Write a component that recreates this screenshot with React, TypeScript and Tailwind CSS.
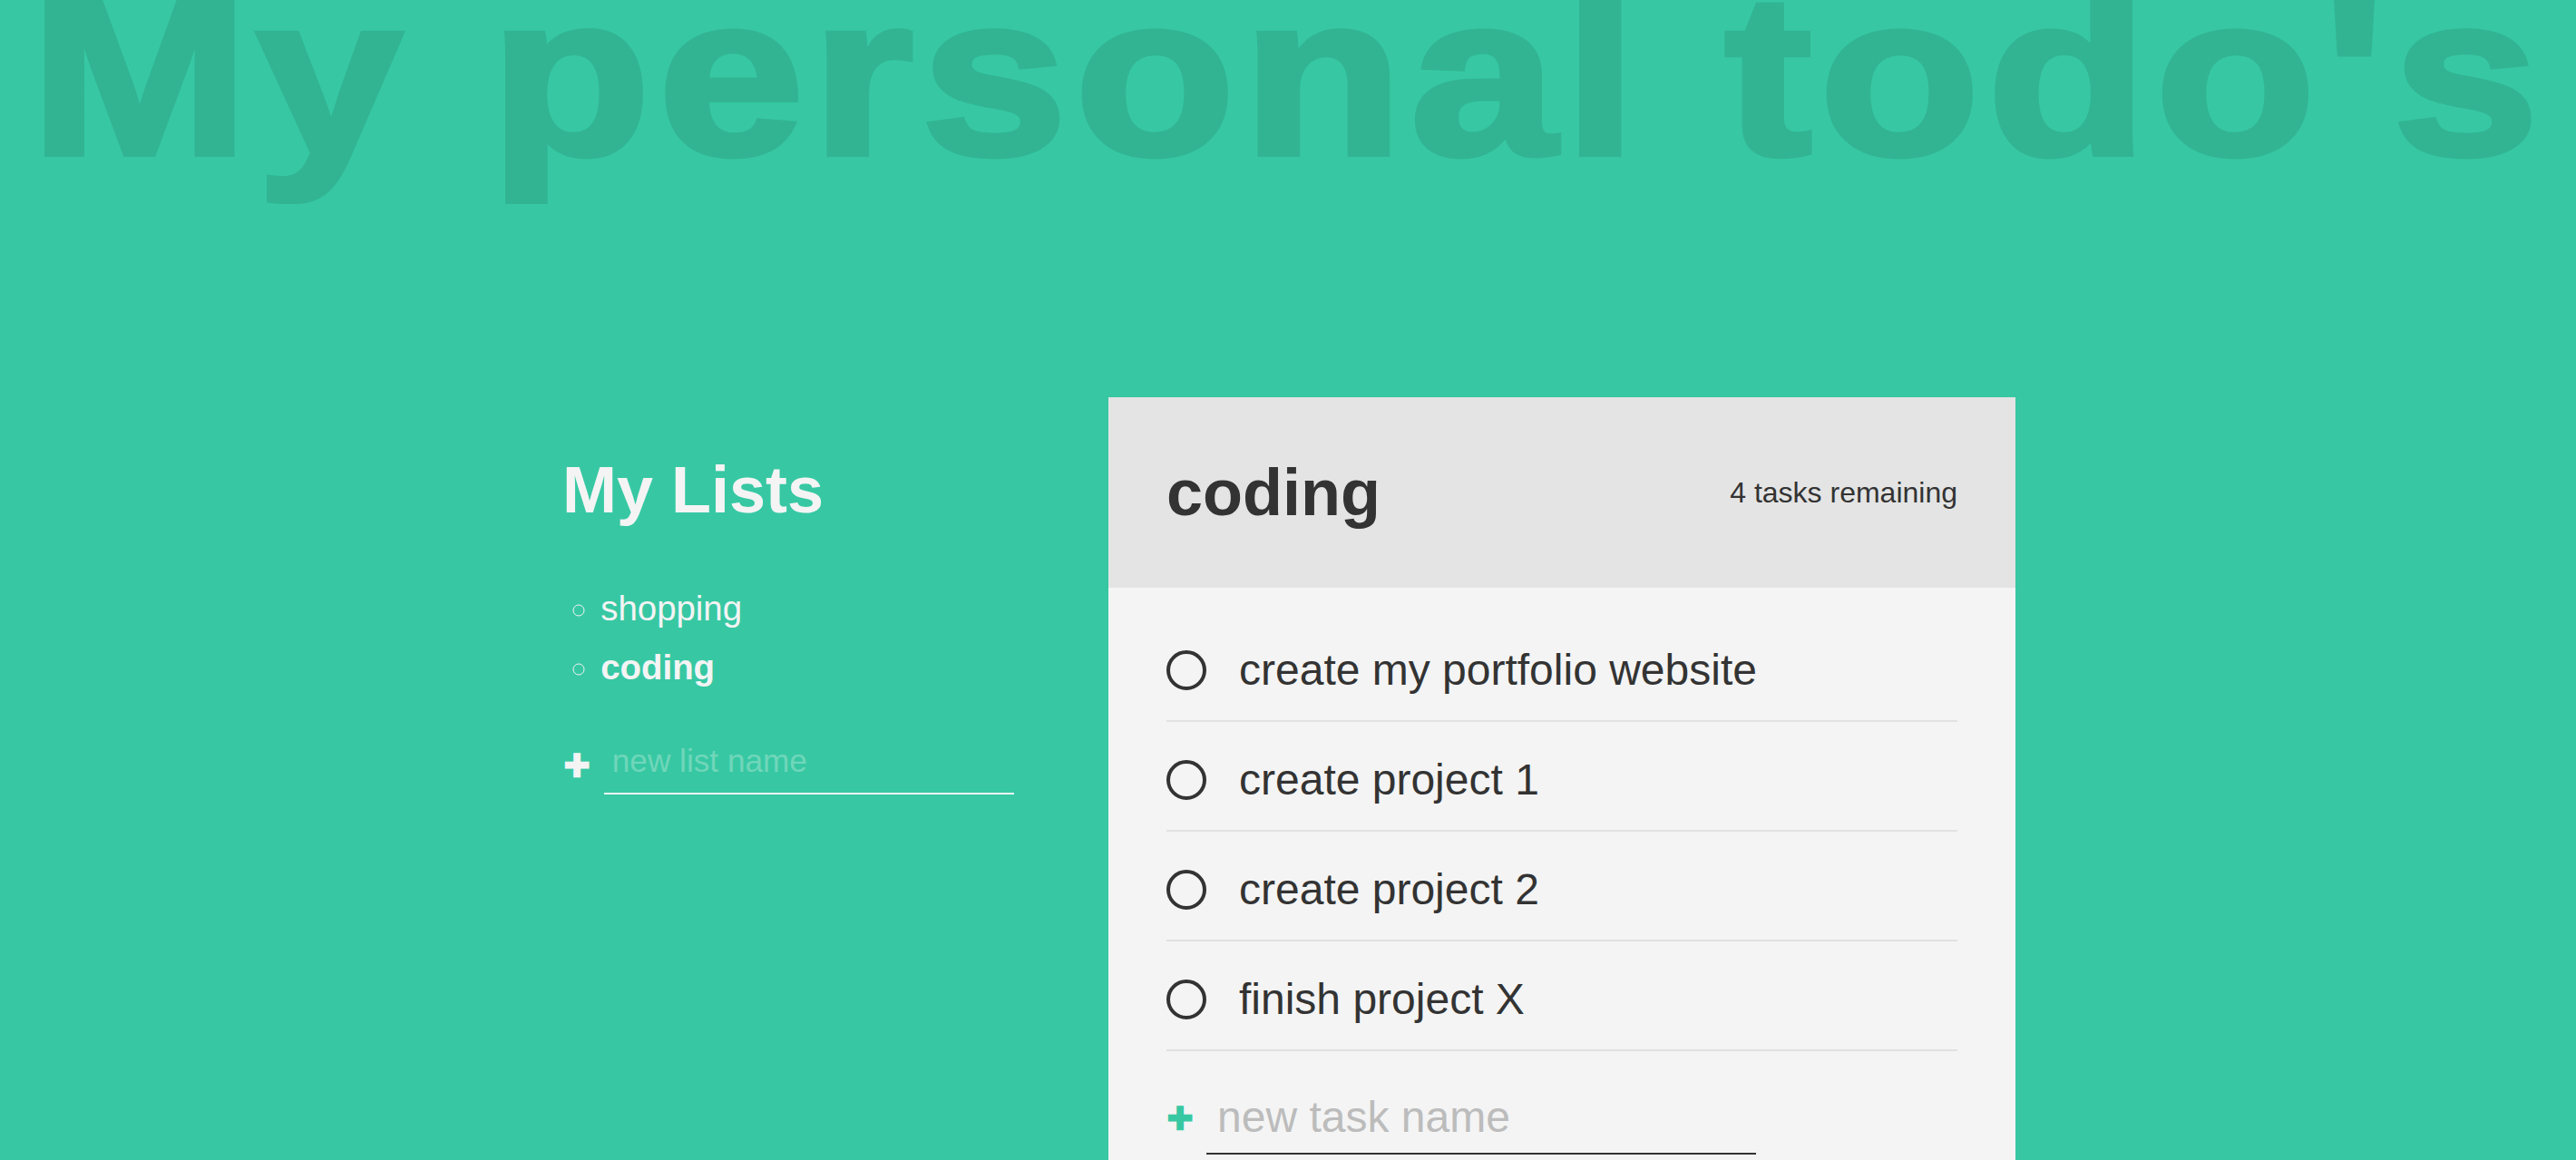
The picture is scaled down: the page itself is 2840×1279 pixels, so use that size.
export default function App() {
  const tasks = [
    "create my portfolio website",
    "create project 1",
    "create project 2",
    "finish project X",
  ];
  return (
    <div className="h-screen overflow-hidden bg-[#37c8a3] font-['Liberation_Sans',Arial,sans-serif] text-[#f4f4f4]">
      <h1 className="mt-[-43px] mb-[229px] h-[252px] whitespace-nowrap text-center text-[252px] leading-[252px] font-bold text-[#32b493]">
        <span className="inline-block tracking-[7px] [transform:scaleX(1.15)] [-webkit-text-stroke:6px_#32b493]">
          My personal todo's
        </span>
      </h1>

      <div className="grid grid-cols-[620px_602px_1000px_1fr] items-start">
        <div className="col-start-2">
          <h2 className="mt-[60.6px] mb-[56.6px] text-[72px] leading-[82.8px] font-bold">My Lists</h2>
          <ul className="mb-[47.65px] list-[circle] pl-[42.24px] text-[38.4px] leading-[65.3px]">
            <li>shopping</li>
            <li className="font-bold">coding</li>
          </ul>
          <form className="flex items-start" onSubmit={(e) => e.preventDefault()}>
            <button
              type="button"
              className="w-[46px] p-0 pl-[2px] text-left text-[48px] leading-[55.2px] font-bold text-[#f4f4f4] [-webkit-text-stroke:2.5px_#f4f4f4]"
            >
              +
            </button>
            <input
              type="text"
              placeholder="new list name"
              className="box-border h-[60px] w-[452px] border-0 border-b-2 border-solid border-[#f4f4f4] bg-transparent px-[8.8px] pt-[3px] pb-[14.6px] text-[35.2px] leading-[40.4px] text-[#f4f4f4] outline-none placeholder:text-[#70d6ba]"
            />
          </form>
        </div>

        <div className="col-start-3 bg-[#f4f4f4] text-[#333]">
          <div className="flex items-center justify-between bg-[#e4e4e4] p-[64px]">
            <h2 className="mr-[72px] text-[72px] leading-[82px] font-bold">coding</h2>
            <p className="text-[32px] leading-[36.8px]">4 tasks remaining</p>
          </div>
          <div className="px-[64px] pt-[63px] pb-[64px]">
            {tasks.map((t) => (
              <div key={t} className="relative mb-[60px] h-[61px]">
                <label className="flex h-[55.2px] items-center text-[48px] leading-[55.2px]">
                  <span className="mr-[36px] box-content inline-block h-[36px] w-[36px] rounded-full border-[4px] border-solid border-[#333]" />
                  {t}
                </label>
                <div className="absolute right-0 bottom-[-24px] left-0 h-[2px] bg-[#e1e1e1]" />
              </div>
            ))}
            <form className="mt-[-3px] flex items-center" onSubmit={(e) => e.preventDefault()}>
              <button
                type="button"
                className="w-[44px] p-0 pl-[1px] text-left text-[48px] leading-[55.2px] font-bold text-[#37c8a3] [-webkit-text-stroke:2.5px_#37c8a3]"
              >
                +
              </button>
              <input
                type="text"
                placeholder="new task name"
                className="box-border h-[81.2px] w-[606px] border-0 border-b-2 border-solid border-[#333] bg-transparent px-[12px] py-[12px] text-[48px] leading-[55.2px] text-[#333] outline-none placeholder:text-[#bcbcbc]"
              />
            </form>
          </div>
        </div>
      </div>
    </div>
  );
}
